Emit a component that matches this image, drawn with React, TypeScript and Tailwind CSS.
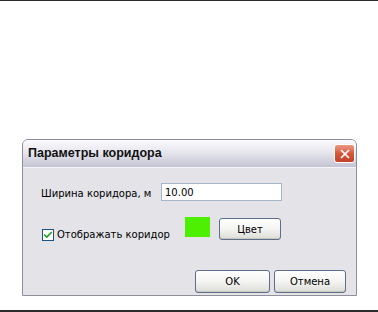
import { X, Check } from "lucide-react";

const font = { fontFamily: '"DejaVu Sans", "Liberation Sans", sans-serif' };

function XpButton({ label, className }: { label: string; className: string }) {
  return (
    <button
      className={`flex items-center justify-center rounded-[3px] border border-[#5b6e8c] bg-gradient-to-b from-white via-[#f4f4f2] to-[#dcdcd6] text-[10px] text-black shadow-[inset_0_-1px_0_#c8c8c0] ${className}`}
    >
      {label}
    </button>
  );
}

export default function App() {
  return (
    <div className="flex h-[312px] w-[378px] flex-col bg-white" style={font}>
      <div className="h-px w-full bg-[#2b2b2b]" />

      <div className="ml-[22px] mt-[138px] flex w-[335px] flex-col rounded-t-[6px] border border-[#8e8e9c] bg-[#e3e3e8]">
        {/* title bar */}
        <div className="flex h-[27px] items-center justify-between rounded-t-[5px] bg-gradient-to-b from-[#fbfbfd] via-[#e4e4ec] to-[#c3c3d3] pl-[5px] pr-[1px]">
          <span className="text-[12.5px] font-bold text-[#111]" style={{ fontFamily: '"Liberation Sans", sans-serif' }}>
            Параметры коридора
          </span>
          <div className="flex h-[19px] w-[21px] items-center justify-center rounded-[3px] border border-white bg-gradient-to-b from-[#e99a86] via-[#d6563b] to-[#c0432a]">
            <X className="h-[14px] w-[14px] text-white" strokeWidth={3} />
          </div>
        </div>

        {/* content */}
        <div className="flex h-[128px] flex-col border-t border-[#f4f4f8] pl-[18px] pr-[10px]">
          <div className="mt-[15px] flex items-center">
            <span className="mt-[3px] w-[120px] text-[10px] text-black">Ширина коридора, м</span>
            <div className="flex h-[18px] w-[121px] items-center border border-[#a5b6c8] bg-white pl-[3px] text-[10px] text-black">
              10.00
            </div>
          </div>

          <div className="mt-[16px] flex items-start">
            <div className="ml-[1px] mt-[10px] flex w-[143px] items-center">
              <div className="flex h-[12px] w-[12px] items-center justify-center border border-[#1c5180] bg-white">
                <Check className="h-[10px] w-[10px] text-[#21a121]" strokeWidth={4} />
              </div>
              <span className="ml-[3px] text-[10px] text-black">Отображать коридор</span>
            </div>
            <div className="h-[20px] w-[25px] bg-[#4cf000]" />
            <XpButton label="Цвет" className="ml-[9px] mt-[1px] h-[22px] w-[62px]" />
          </div>

          <div className="mt-[28px] flex justify-end gap-[4px]">
            <XpButton label="OK" className="h-[23px] w-[75px]" />
            <XpButton label="Отмена" className="h-[23px] w-[72px]" />
          </div>
        </div>
      </div>

      <div className="mt-[14px] h-[2px] w-full bg-[#2b2b2b]" />
    </div>
  );
}
